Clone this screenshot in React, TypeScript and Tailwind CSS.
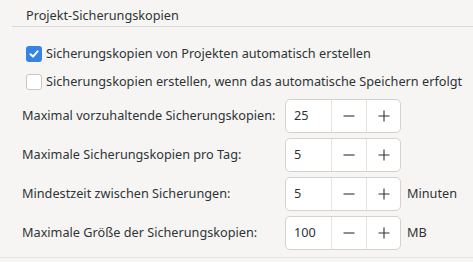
import React from "react";

function Check({ checked }: { checked: boolean }) {
  return checked ? (
    <div className="w-4 h-4 rounded-[3px] bg-[#3584e4] flex items-center justify-center shrink-0">
      <svg width="12" height="12" viewBox="0 0 12 12">
        <path d="M2.5 6.2 L5 8.6 L9.6 3.4" fill="none" stroke="white" strokeWidth="2" strokeLinecap="round" strokeLinejoin="round" />
      </svg>
    </div>
  ) : (
    <div className="w-4 h-4 rounded-[3px] bg-white border border-[#cdc7c2] shrink-0" />
  );
}

function Spin({ value }: { value: string }) {
  return (
    <div className="flex h-[34px] w-[116px] rounded-[5px] border border-[#d6d1cd] bg-white shrink-0">
      <div className="w-[45px] flex items-center pl-[8px]">{value}</div>
      <div className="w-[35px] border-l border-[#e6e3e0] flex items-center justify-center">
        <svg width="14" height="14" viewBox="0 0 14 14">
          <path d="M1.5 7 H12.5" stroke="#2e3436" strokeWidth="1.1" />
        </svg>
      </div>
      <div className="flex-1 border-l border-[#e6e3e0] flex items-center justify-center">
        <svg width="14" height="14" viewBox="0 0 14 14">
          <path d="M1.5 7 H12.5 M7 1.5 V12.5" stroke="#2e3436" strokeWidth="1.1" />
        </svg>
      </div>
    </div>
  );
}

const rows = [
  { label: "Maximal vorzuhaltende Sicherungskopien:", value: "25", unit: "" },
  { label: "Maximale Sicherungskopien pro Tag:", value: "5", unit: "" },
  { label: "Mindestzeit zwischen Sicherungen:", value: "5", unit: "Minuten" },
  { label: "Maximale Größe der Sicherungskopien:", value: "100", unit: "MB" },
];

export default function App() {
  return (
    <div
      className="w-[473px] h-[262px] bg-[#f6f5f4] text-[#2e3436] text-[12.7px] overflow-hidden flex flex-col"
      style={{ fontFamily: '"Noto Sans", sans-serif' }}
    >
      <div className="ml-[12px] mt-[7px] h-[20px] border-b border-[#dcd8d4] pl-[14px] leading-[17px]">
        Projekt-Sicherungskopien
      </div>
      <div className="flex flex-col gap-[12px] mt-[19px] pl-[26px]">
        <div className="flex items-center gap-[4px] h-[16px]">
          <Check checked={true} />
          <span>Sicherungskopien von Projekten automatisch erstellen</span>
        </div>
        <div className="flex items-center gap-[4px] h-[16px]">
          <Check checked={false} />
          <span>Sicherungskopien erstellen, wenn das automatische Speichern erfolgt</span>
        </div>
      </div>
      <div className="flex flex-col gap-[5px] mt-[9px] pl-[22px]">
        {rows.map((r) => (
          <div key={r.label} className="flex items-center h-[34px]">
            <div className="w-[263px]">{r.label}</div>
            <Spin value={r.value} />
            {r.unit && <div className="ml-[6px]">{r.unit}</div>}
          </div>
        ))}
      </div>
      <div className="mt-[7px] border-b border-[#e4e1de]" />
    </div>
  );
}
